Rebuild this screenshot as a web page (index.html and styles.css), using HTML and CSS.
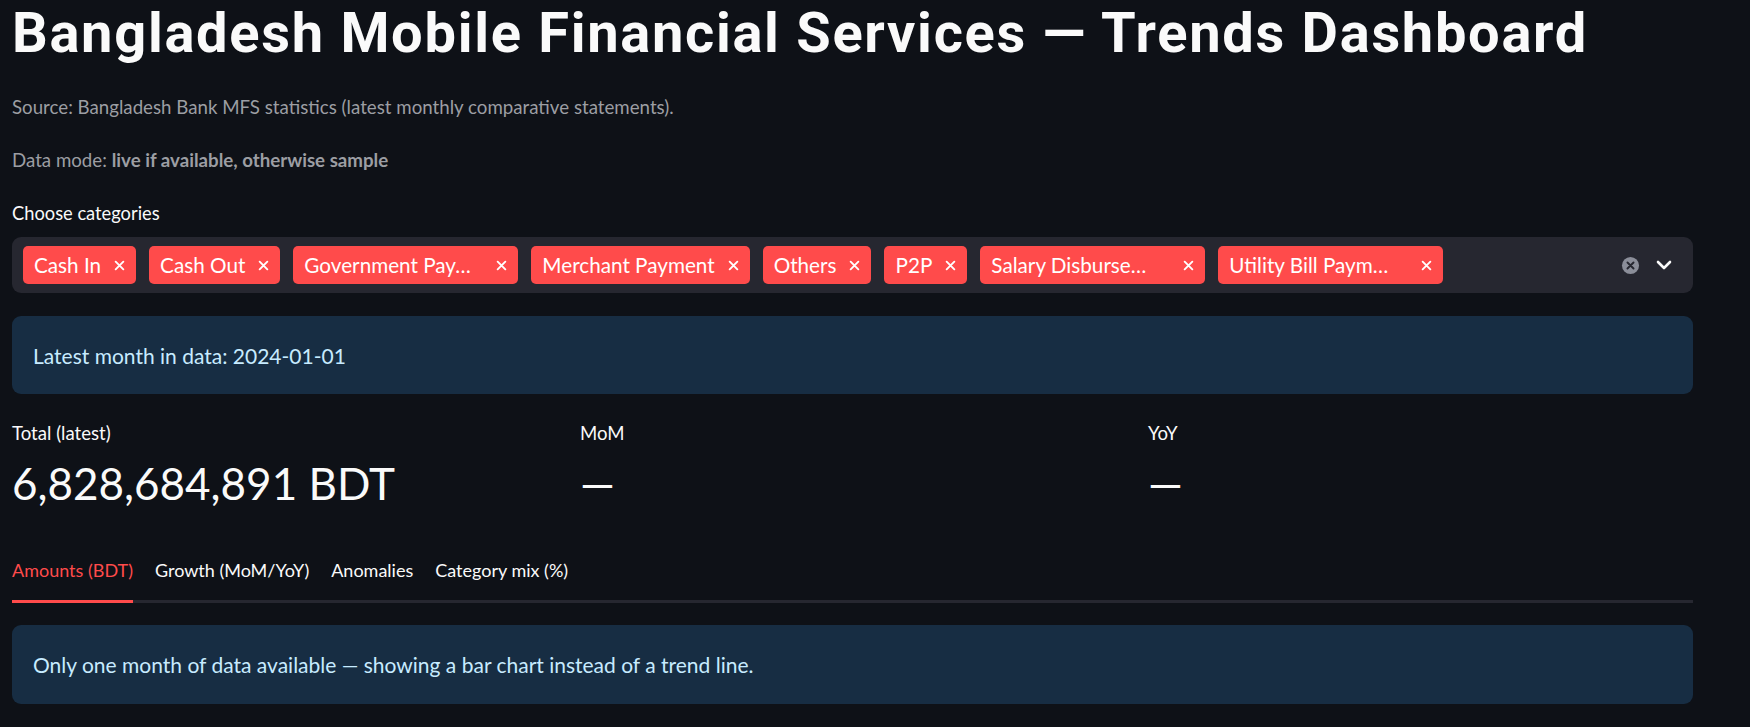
FILE: index.html
```html
<!DOCTYPE html>
<html lang="en">
<head>
<meta charset="utf-8">
<title>Bangladesh MFS Trends Dashboard</title>
<link rel="stylesheet" href="styles.css">
</head>
<body>
<main class="app">
  <h1 class="title">Bangladesh Mobile Financial Services — Trends Dashboard</h1>
  <p class="caption src">Source: Bangladesh Bank MFS statistics (latest monthly comparative statements).</p>
  <p class="caption mode">Data mode: <strong>live if available, otherwise sample</strong></p>

  <div class="field">
    <div class="field-label">Choose categories</div>
    <div class="multiselect">
      <div class="tags">
        <span class="tag"><span class="tag-text">Cash In</span><svg class="tag-x" viewBox="0 0 10 10"><path d="M1.5 1.5 8.5 8.5M8.5 1.5 1.5 8.5"/></svg></span>
        <span class="tag"><span class="tag-text">Cash Out</span><svg class="tag-x" viewBox="0 0 10 10"><path d="M1.5 1.5 8.5 8.5M8.5 1.5 1.5 8.5"/></svg></span>
        <span class="tag tag-trunc"><span class="tag-text">Government Pay…</span><svg class="tag-x" viewBox="0 0 10 10"><path d="M1.5 1.5 8.5 8.5M8.5 1.5 1.5 8.5"/></svg></span>
        <span class="tag"><span class="tag-text">Merchant Payment</span><svg class="tag-x" viewBox="0 0 10 10"><path d="M1.5 1.5 8.5 8.5M8.5 1.5 1.5 8.5"/></svg></span>
        <span class="tag"><span class="tag-text">Others</span><svg class="tag-x" viewBox="0 0 10 10"><path d="M1.5 1.5 8.5 8.5M8.5 1.5 1.5 8.5"/></svg></span>
        <span class="tag"><span class="tag-text">P2P</span><svg class="tag-x" viewBox="0 0 10 10"><path d="M1.5 1.5 8.5 8.5M8.5 1.5 1.5 8.5"/></svg></span>
        <span class="tag tag-trunc"><span class="tag-text">Salary Disburse…</span><svg class="tag-x" viewBox="0 0 10 10"><path d="M1.5 1.5 8.5 8.5M8.5 1.5 1.5 8.5"/></svg></span>
        <span class="tag tag-trunc"><span class="tag-text">Utility Bill Paym…</span><svg class="tag-x" viewBox="0 0 10 10"><path d="M1.5 1.5 8.5 8.5M8.5 1.5 1.5 8.5"/></svg></span>
      </div>
      <div class="ms-icons">
        <svg class="clear-icon" viewBox="0 0 20 20"><circle cx="10" cy="10" r="9" fill="#8b8e99"/><path d="M6.8 6.8 13.2 13.2M13.2 6.8 6.8 13.2" stroke="#262730" stroke-width="2" stroke-linecap="round"/></svg>
        <svg class="chevron" viewBox="0 0 16 10"><path d="M2 2 8 8 14 2" fill="none" stroke="#fafafa" stroke-width="2.6" stroke-linecap="round" stroke-linejoin="round"/></svg>
      </div>
    </div>
  </div>

  <div class="alert alert-1">Latest month in data: 2024-01-01</div>

  <div class="metrics">
    <div class="metric">
      <div class="metric-label">Total (latest)</div>
      <div class="metric-value">6,828,684,891 BDT</div>
    </div>
    <div class="metric">
      <div class="metric-label">MoM</div>
      <div class="metric-value">—</div>
    </div>
    <div class="metric">
      <div class="metric-label">YoY</div>
      <div class="metric-value">—</div>
    </div>
  </div>

  <div class="tabs">
    <div class="tab active">Amounts (BDT)</div>
    <div class="tab">Growth (MoM/YoY)</div>
    <div class="tab">Anomalies</div>
    <div class="tab">Category mix (%)</div>
  </div>

  <div class="alert alert-2">Only one month of data available — showing a bar chart instead of a trend line.</div>
</main>
</body>
</html>
```

FILE: styles.css
```css
html, body {
  margin: 0;
  padding: 0;
  background: #0e1117;
  color: #fafafa;
  font-family: Lato, "Noto Sans", sans-serif;
}

.app {
  width: 1681px;
  margin-left: 12px;
  display: flex;
  flex-direction: column;
}

.title {
  margin: 0;
  height: 66px;
  line-height: 66px;
  font-family: Roboto, Lato, sans-serif;
  font-size: 56px;
  font-weight: 700;
  letter-spacing: 1.7px;
  white-space: nowrap;
}

.caption {
  margin: 0;
  height: 26px;
  line-height: 26px;
  font-size: 18.7px;
  color: #9c9ea3;
}

.src { margin-top: 28px; }
.mode { margin-top: 27px; }
.mode strong { font-weight: 700; }

.field { margin-top: 27px; }

.field-label {
  height: 26px;
  line-height: 26px;
  font-size: 18.3px;
  color: #fafafa;
}

.multiselect {
  margin-top: 11px;
  height: 56px;
  background: #262730;
  border-radius: 9px;
  display: flex;
  align-items: center;
  padding: 0 21px 0 11px;
  box-sizing: border-box;
}

.tags {
  flex: 1;
  display: flex;
  gap: 13px;
  align-items: center;
}

.tag {
  height: 38px;
  display: flex;
  align-items: center;
  justify-content: space-between;
  gap: 13px;
  padding: 0 11px 0 11px;
  background: #ff4b4b;
  border-radius: 5px;
  font-size: 20.7px;
  color: #fff;
  white-space: nowrap;
  box-sizing: border-box;
}

.tag-trunc { width: 225px; }

.tag-x {
  width: 11px;
  height: 11px;
  flex: none;
  fill: none;
  stroke: #fff;
  stroke-width: 1.7;
  stroke-linecap: round;
}

.ms-icons {
  display: flex;
  align-items: center;
  gap: 16px;
}

.clear-icon { width: 19px; height: 19px; }
.chevron { width: 16px; height: 10px; }

.alert {
  background: #172d43;
  color: #c7ebff;
  border-radius: 9px;
  padding: 0 21px;
  display: flex;
  align-items: center;
  font-size: 21px;
  box-sizing: border-box;
}

.alert-1 { margin-top: 23px; height: 78px; }
.alert-2 { margin-top: 22px; height: 79px; }

.metrics {
  margin-top: 26px;
  display: grid;
  grid-template-columns: repeat(3, 1fr);
  column-gap: 23px;
}

.metric-label {
  height: 26px;
  line-height: 26px;
  font-size: 18.6px;
  color: #fafafa;
}

.metric-value {
  margin-top: 9px;
  height: 56px;
  line-height: 56px;
  font-size: 44px;
  color: #fafafa;
  white-space: nowrap;
}

.tabs {
  margin-top: 29px;
  display: flex;
  gap: 22px;
  border-bottom: 3px solid #262730;
  height: 63px;
  box-sizing: border-box;
}

.tab {
  height: 63px;
  line-height: 60px;
  font-size: 18px;
  color: #fafafa;
  box-sizing: border-box;
  margin-bottom: -3px;
  border-bottom: 3px solid transparent;
  white-space: nowrap;
}

.tab.active {
  color: #ff4b4b;
  border-bottom-color: #ff4b4b;
}
```
